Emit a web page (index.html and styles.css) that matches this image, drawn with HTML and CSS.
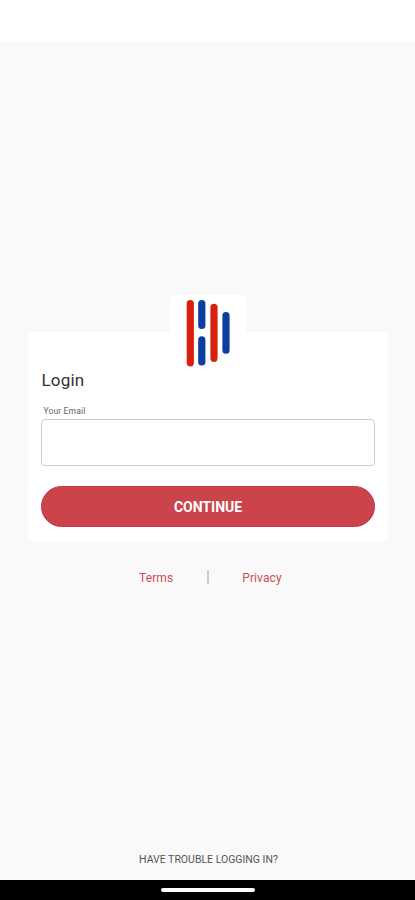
FILE: index.html
```html
<!DOCTYPE html>
<html lang="en">
<head>
    <meta charset="UTF-8">
    <meta name="viewport" content="width=device-width, initial-scale=1.0">
    <title>Login</title>
    <link rel="stylesheet" href="styles.css">
</head>
<body>
    <div class="screen">
        <div class="status-bar"></div>
        <main class="content">
            <form class="card">
                <div class="logo">
                    <svg width="76" height="76" viewBox="0 0 76 76">
                        <g fill="none" stroke-width="7.2" stroke-linecap="round">
                            <path stroke="#d8200f" d="M20.3 8.6V67.8M44 12.3V63.3" />
                            <path stroke="#0c3da0" d="M31.8 8.6V30.5M31.8 44.8V67M56 20.7V55.2" />
                        </g>
                    </svg>
                </div>
                <h1>Login</h1>
                <label for="email">Your Email</label>
                <input type="email" id="email" />
                <button type="button">CONTINUE</button>
            </form>
            <div class="links">
                <a href="#">Terms</a>
                <span class="divider"></span>
                <a href="#">Privacy</a>
            </div>
            <a href="#" class="trouble">HAVE TROUBLE LOGGING IN?</a>
        </main>
        <div class="nav-bar">
            <div class="handle"></div>
        </div>
    </div>
</body>
</html>
```
FILE: styles.css
```css
html, body {
    padding: 0;
    margin: 0;
}
* {
    box-sizing: border-box;
}
body {
    font-family: Roboto, "Liberation Sans", sans-serif;
}
a {
    text-decoration: none;
}

.screen {
    display: flex;
    flex-direction: column;
    height: 900px;
    overflow: hidden;
    background: #f9f9f9;
}
.status-bar {
    height: 42px;
    background: #fff;
}
.content {
    flex: 1;
    display: flex;
    flex-direction: column;
    padding: 290px 27px 0 28px;
}

.card {
    display: flex;
    flex-direction: column;
    height: 210px;
    padding: 0 13px;
    background: #fff;
    border-radius: 5px;
}
.logo {
    align-self: center;
    width: 76px;
    height: 76px;
    margin-top: -37px;
    background: #fff;
    border-radius: 6px;
}
.logo svg {
    display: block;
}
h1 {
    margin: -1px 0 0 0.5px;
    font-size: 17px;
    font-weight: 400;
    line-height: 20px;
    letter-spacing: 0.2px;
    color: #333;
}
label {
    margin: 15px 0 0 2.5px;
    font-size: 8.5px;
    line-height: 12px;
    letter-spacing: 0.15px;
    color: #666;
}
input {
    height: 47px;
    margin-top: 2px;
    padding: 0 12px;
    border: 1px solid #ccc;
    border-radius: 4px;
    background: #fff;
    font-size: 14px;
}
button {
    height: 41px;
    margin: 20px 0 0;
    padding: 0;
    border: 1px solid #c93643;
    border-radius: 21px;
    background: #cc444b;
    color: #fff;
    font-family: inherit;
    font-size: 14px;
    font-weight: 700;
}

.links {
    display: flex;
    align-items: center;
    height: 16px;
    margin-top: 27px;
    padding-left: 111px;
    font-size: 12px;
    letter-spacing: 0.1px;
}
.links a {
    padding-top: 1px;
    color: #cc4e58;
}
.divider {
    width: 2px;
    height: 14px;
    margin: 0 33.5px;
    background: #ccc;
}
.trouble {
    margin: auto 0 13px;
    padding-left: 1px;
    font-size: 10.5px;
    line-height: 14px;
    text-align: center;
    color: #555;
}

.nav-bar {
    display: flex;
    justify-content: center;
    height: 20px;
    padding-top: 8px;
    background: #000;
}
.handle {
    width: 94px;
    height: 4px;
    border-radius: 2px;
    background: #fff;
}
```
